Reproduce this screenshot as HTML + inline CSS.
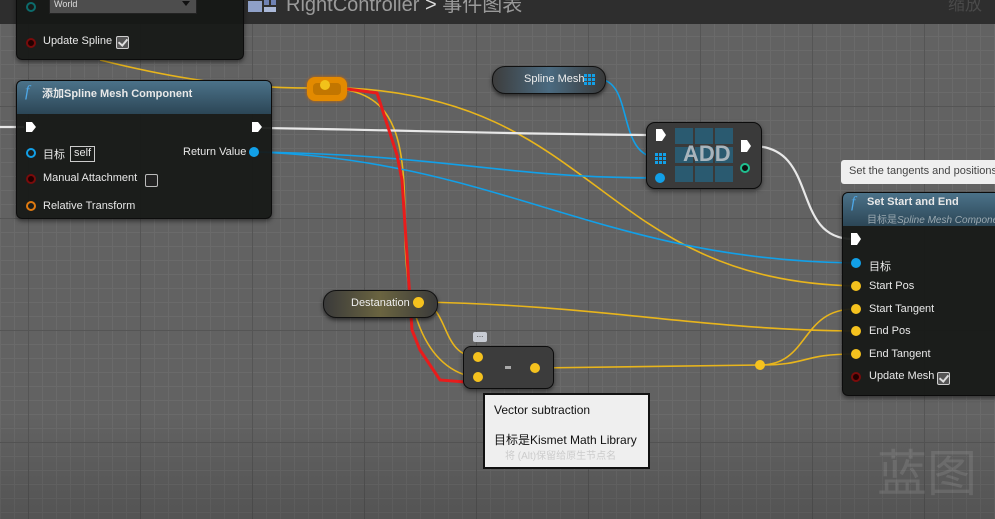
<!DOCTYPE html>
<html><head><meta charset="utf-8"><style>
*{margin:0;padding:0;box-sizing:border-box}
body{width:995px;height:519px;overflow:hidden;position:relative;font-family:"Liberation Sans","Noto Sans CJK SC",sans-serif;background:#626262}
.grid{position:absolute;inset:0;
background-image:
linear-gradient(to right,#555 1px,transparent 1px),
linear-gradient(to bottom,#555 1px,transparent 1px),
linear-gradient(to right,#6a6a6a 1px,transparent 1px),
linear-gradient(to bottom,#6a6a6a 1px,transparent 1px);
background-size:112px 112px,112px 112px,14px 14px,14px 14px;
background-position:28px 0,0 106px,0 0,0 8px}
.vig{position:absolute;inset:0;background:linear-gradient(to bottom,rgba(0,0,0,0) 80%,rgba(0,0,0,.15))}
.top{position:absolute;left:0;top:0;width:995px;height:24px;background:#2e2e2e}
.node{position:absolute;background:rgba(22,24,22,.93);border:1px solid #0c0c0c;border-radius:6px;box-shadow:0 2px 5px rgba(0,0,0,.5);color:#e6e6e6;font-size:11px}
.hdr{position:absolute;left:0;right:0;top:0;height:33px;border-radius:5px 5px 0 0;background:linear-gradient(to bottom,#4b7289,#2c4656)}
.lbl{position:absolute;font-size:11px;color:#e8e8e8;white-space:nowrap}
.pill{position:absolute;border-radius:13px;border:1px solid #111;box-shadow:0 2px 4px rgba(0,0,0,.6);color:#eee;font-size:11px}
.cb{position:absolute;width:13px;height:13px;border:1.5px solid #cfcfcf;border-radius:2px;background:#3a3a3a}
.cb.on::after{content:"";position:absolute;left:3px;top:0px;width:4px;height:7px;border-right:2px solid #ddd;border-bottom:2px solid #ddd;transform:rotate(40deg)}
.tip{position:absolute;background:#efefef;color:#111}
</style></head><body>
<div class="grid"></div><div class="vig"></div>
<div class="top"></div>
<svg style="position:absolute;left:248px;top:0" width="30" height="14"><rect x="0" y="1" width="14" height="11" fill="#8fa0c8"/><rect x="16" y="0" width="5" height="5" fill="#6f82b4"/><rect x="23" y="0" width="5" height="5" fill="#6f82b4"/><rect x="16" y="7" width="12" height="5" fill="#aab8d8"/></svg>
<div style="position:absolute;left:286px;top:-12px;font-size:20px;color:#9a9a9a;white-space:nowrap">RightController <span style="color:#ddd">&gt;</span> 事件图表</div>
<div style="position:absolute;left:948px;top:-10px;font-size:17px;color:#4a4a4a;white-space:nowrap">缩放</div>

<svg style="position:absolute;left:0;top:0" width="995" height="519">
<g fill="none" stroke-width="1.6">
<path d="M100 60 C180 80 240 88 312 88" stroke="#e8b51c"/>
<path d="M347 88 C600 100 600 280 855 286" stroke="#e8b51c"/>
<path d="M347 90 C400 100 405 150 405 230 C405 300 420 370 478 378" stroke="#e8b51c"/>
<path d="M420 302 C450 305 440 357 478 357" stroke="#e8b51c"/>
<path d="M420 302 C600 305 700 330 855 331" stroke="#e8b51c"/>
<path d="M536 368 L760 365" stroke="#e8b51c"/>
<path d="M760 365 C810 365 800 309 855 309" stroke="#e8b51c"/>
<path d="M760 365 C810 365 800 354 855 354" stroke="#e8b51c"/>
<path d="M255 152 C450 155 500 178 660 178" stroke="#12a0e8"/>
<path d="M255 152 C500 160 600 260 855 263" stroke="#12a0e8"/>
<path d="M598 79 C635 80 615 158 660 158" stroke="#12a0e8"/>
<path d="M0 127 L24 127" stroke="#e8e8e8" stroke-width="2.2"/>
<path d="M262 128 C400 130 500 134 655 135" stroke="#e8e8e8" stroke-width="2.2"/>
<path d="M752 146 C820 146 790 238 852 239" stroke="#e8e8e8" stroke-width="2.2"/>
<path d="M347 89 L377 93 L397 155 L402 180 L410 300 L412 330 L420 350 L440 380 L465 382 L478 380" stroke="#e81c1c" stroke-width="3"/>
</g>
</svg>

<!-- node 1 -->
<div class="node" style="left:16px;top:-10px;width:228px;height:70px;border-top:none;border-radius:0 0 6px 6px">
<div class="lbl" style="left:26px;top:-4px;color:#999">Coordinate Space</div>
<div style="position:absolute;left:32px;top:6px;width:148px;height:18px;background:#4d4d4d;border:1px solid #222;font-size:9px;color:#ddd;padding:2px 4px">World<span style="position:absolute;right:6px;top:4px;border:4px solid transparent;border-top:5px solid #111"></span></div>
<div class="lbl" style="left:26px;top:45px">Update Spline</div>
<div class="cb on" style="left:99px;top:46px;background:#555"></div>
</div>
<svg style="position:absolute;left:24px;top:0" width="20" height="50"><circle cx="7" cy="7" r="4" fill="none" stroke="#0c6b6b" stroke-width="2"/><circle cx="7" cy="43" r="4" fill="#200" stroke="#7a0b0b" stroke-width="2"/></svg>

<!-- node 2 -->
<div class="node" style="left:16px;top:80px;width:256px;height:139px">
<div class="hdr"></div>
<div class="lbl" style="left:8px;top:2px;font-size:16px;color:#4ea8e8;font-style:italic;font-family:'Liberation Serif',serif">f</div>
<div class="lbl" style="left:25px;top:4px;font-weight:bold">添加Spline Mesh Component</div>
<div class="lbl" style="left:26px;top:65px">目标</div>
<div style="position:absolute;left:53px;top:65px;border:1px solid #ccc;padding:0 3px;font-size:11px;height:16px">self</div>
<div class="lbl" style="left:166px;top:65px">Return Value</div>
<div class="lbl" style="left:26px;top:91px">Manual Attachment</div>
<div class="cb" style="left:128px;top:93px;border-color:#bbb;background:#222"></div>
<div class="lbl" style="left:26px;top:119px">Relative Transform</div>
</div>
<svg style="position:absolute;left:20px;top:118px" width="250" height="100">
<path d="M6 4 h6 l4 5 l-4 5 h-6z" fill="#fff"/><path d="M232 4 h6 l4 5 l-4 5 h-6z" fill="#fff"/>
<circle cx="11" cy="35" r="4" fill="none" stroke="#12a0e8" stroke-width="2"/>
<circle cx="234" cy="34" r="5" fill="#12a0e8"/>
<circle cx="11" cy="61" r="4" fill="#200" stroke="#7a0b0b" stroke-width="2"/>
<circle cx="11" cy="88" r="4" fill="none" stroke="#e07a10" stroke-width="2"/>
</svg>

<!-- reroute -->
<div style="position:absolute;left:307px;top:77px;width:40px;height:24px;border-radius:8px;background:#e38a00;box-shadow:0 0 3px #c60"><div style="position:absolute;left:6px;top:6px;width:28px;height:12px;border-radius:4px;background:#c27600"></div></div>
<div style="position:absolute;left:320px;top:80px;width:10px;height:10px;border-radius:5px;background:#f2c21a"></div>

<!-- spline mesh pill -->
<div class="pill" style="left:492px;top:66px;width:114px;height:28px;background:linear-gradient(to right,#3d3d3d,#4a6a80 50%,#3a3a3a)"><span style="position:absolute;left:31px;top:6px">Spline Mesh</span></div>
<svg style="position:absolute;left:584px;top:74px" width="12" height="12" fill="#12a0e8"><rect x="0" y="0" width="3" height="3"/><rect x="4" y="0" width="3" height="3"/><rect x="8" y="0" width="3" height="3"/><rect x="0" y="4" width="3" height="3"/><rect x="4" y="4" width="3" height="3"/><rect x="8" y="4" width="3" height="3"/><rect x="0" y="8" width="3" height="3"/><rect x="4" y="8" width="3" height="3"/><rect x="8" y="8" width="3" height="3"/></svg>

<!-- ADD -->
<div class="node" style="left:646px;top:122px;width:116px;height:67px;background:#3a3a3a;border-radius:9px">
<svg style="position:absolute;left:28px;top:5px" width="62" height="56" fill="#2a5a70"><rect x="0" y="0" width="18" height="16"/><rect x="20" y="0" width="18" height="16"/><rect x="40" y="0" width="18" height="16"/><rect x="0" y="19" width="18" height="16"/><rect x="20" y="19" width="18" height="16"/><rect x="40" y="19" width="18" height="16"/><rect x="0" y="38" width="18" height="16"/><rect x="20" y="38" width="18" height="16"/><rect x="40" y="38" width="18" height="16"/></svg>
<div style="position:absolute;left:36px;top:18px;font-size:22px;font-weight:bold;color:#a8b4bc">ADD</div>
</div>
<svg style="position:absolute;left:650px;top:126px" width="110" height="60">
<path d="M6 3 h6 l4 6 l-4 6 h-6z" fill="#fff"/>
<g fill="#12a0e8"><rect x="5" y="27" width="3" height="3"/><rect x="9" y="27" width="3" height="3"/><rect x="13" y="27" width="3" height="3"/><rect x="5" y="31" width="3" height="3"/><rect x="9" y="31" width="3" height="3"/><rect x="13" y="31" width="3" height="3"/><rect x="5" y="35" width="3" height="3"/><rect x="9" y="35" width="3" height="3"/><rect x="13" y="35" width="3" height="3"/></g>
<circle cx="10" cy="52" r="5" fill="#12a0e8"/>
<path d="M91 14 h6 l4 6 l-4 6 h-6z" fill="#fff"/>
<circle cx="95" cy="42" r="4" fill="#111" stroke="#20c090" stroke-width="2"/>
</svg>

<!-- tooltip top right -->
<div class="tip" style="left:841px;top:160px;width:160px;height:24px;border-radius:3px;font-size:11px;padding:5px 8px;color:#444;white-space:nowrap">Set the tangents and positions</div>

<!-- set start and end -->
<div class="node" style="left:842px;top:192px;width:160px;height:204px">
<div class="hdr"></div>
<div class="lbl" style="left:8px;top:1px;font-size:16px;color:#4ea8e8;font-style:italic;font-family:'Liberation Serif',serif">f</div>
<div class="lbl" style="left:24px;top:3px;font-weight:bold">Set Start and End</div>
<div class="lbl" style="left:24px;top:18px;color:#9aa8b0;font-size:10px">目标是<i>Spline Mesh Component</i></div>
<div class="lbl" style="left:26px;top:65px">目标</div>
<div class="lbl" style="left:26px;top:87px">Start Pos</div>
<div class="lbl" style="left:26px;top:110px">Start Tangent</div>
<div class="lbl" style="left:26px;top:132px">End Pos</div>
<div class="lbl" style="left:26px;top:155px">End Tangent</div>
<div class="lbl" style="left:26px;top:177px">Update Mesh</div>
<div class="cb on" style="left:94px;top:179px;background:#555"></div>
</div>
<svg style="position:absolute;left:846px;top:230px" width="24" height="160">
<path d="M5 3 h6 l4 6 l-4 6 h-6z" fill="#fff"/>
<circle cx="10" cy="33" r="5" fill="#12a0e8"/>
<circle cx="10" cy="56" r="5" fill="#f5c21e"/><circle cx="10" cy="79" r="5" fill="#f5c21e"/>
<circle cx="10" cy="101" r="5" fill="#f5c21e"/><circle cx="10" cy="124" r="5" fill="#f5c21e"/>
<circle cx="10" cy="147" r="4" fill="#200" stroke="#7a0b0b" stroke-width="2"/>
</svg>

<!-- destanation -->
<div class="pill" style="left:323px;top:290px;width:115px;height:28px;background:linear-gradient(to right,#3a3a3a,#6a6440 50%,#3a3a3a)"><span style="position:absolute;left:27px;top:6px">Destanation</span></div>
<div style="position:absolute;left:413px;top:297px;width:11px;height:11px;border-radius:6px;background:#f5c21e"></div>

<!-- subtract -->
<div style="position:absolute;left:473px;top:332px;width:14px;height:10px;background:#c8ccd4;border-radius:2px;font-size:8px;line-height:5px;text-align:center;color:#333">...</div>
<div class="node" style="left:463px;top:346px;width:91px;height:43px;background:#3c3c3c;border-radius:8px"></div>
<svg style="position:absolute;left:463px;top:346px" width="91" height="43">
<circle cx="15" cy="11" r="5" fill="#f5c21e"/><circle cx="15" cy="31" r="5" fill="#f5c21e"/>
<rect x="42" y="20" width="6" height="3" fill="#aaa"/>
<circle cx="72" cy="22" r="5" fill="#f5c21e"/>
</svg>
<div style="position:absolute;left:755px;top:360px;width:10px;height:10px;border-radius:5px;background:#f5c21e"></div>

<!-- tooltip box -->
<div class="tip" style="left:483px;top:393px;width:167px;height:76px;border:2px solid #111">
<div style="position:absolute;left:9px;top:8px;font-size:12px">Vector subtraction</div>
<div style="position:absolute;left:9px;top:36px;font-size:12px;white-space:nowrap">目标是Kismet Math Library</div>
<div style="position:absolute;left:20px;top:52px;font-size:10px;color:#ccc;white-space:nowrap">将 (Alt)保留给原生节点名</div>
</div>

<div style="position:absolute;left:877px;top:440px;font-size:50px;color:rgba(255,255,255,.1);font-family:'Noto Sans CJK SC',sans-serif;white-space:nowrap;line-height:60px">蓝图</div>
</body></html>
